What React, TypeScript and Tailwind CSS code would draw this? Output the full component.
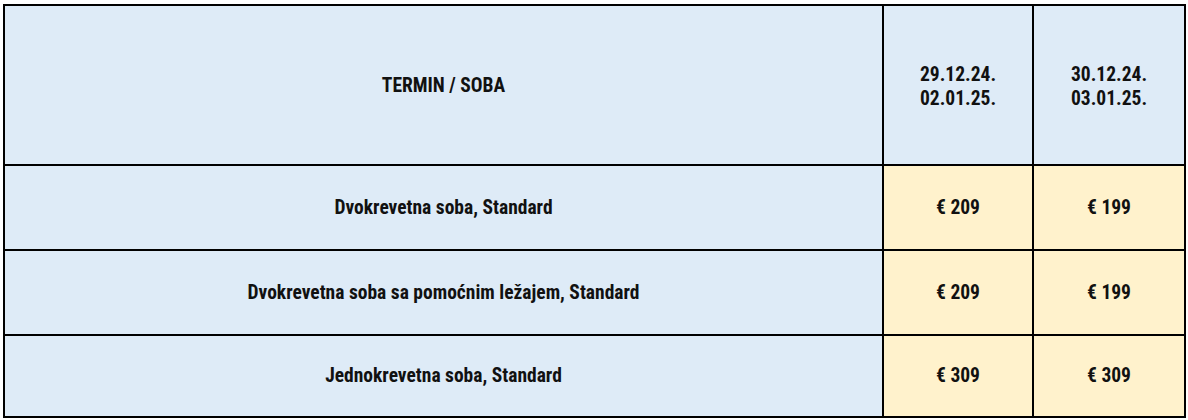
const rows = [
  { name: "Dvokrevetna soba, Standard", a: "€ 209", b: "€ 199" },
  { name: "Dvokrevetna soba sa pomoćnim ležajem, Standard", a: "€ 209", b: "€ 199" },
  { name: "Jednokrevetna soba, Standard", a: "€ 309", b: "€ 309" },
];

export default function App() {
  return (
    <div className="h-[420px] w-[1188px] bg-white pl-[3px] pt-[4px] font-['Roboto_Condensed','Liberation_Sans_Narrow',sans-serif] font-bold text-[19.5px] text-[#111]">
      <table className="w-[1181px] table-fixed border-collapse">
        <colgroup>
          <col className="w-[879px]" />
          <col className="w-[150px]" />
          <col className="w-[152px]" />
        </colgroup>
        <thead>
          <tr className="h-[160px] bg-[#deebf7]">
            <th className="border-2 border-black pt-[2px] text-center">TERMIN / SOBA</th>
            <th className="border-2 border-black pt-[4px] text-center leading-6">
              29.12.24.
              <br />
              02.01.25.
            </th>
            <th className="border-2 border-black pt-[4px] text-center leading-6">
              30.12.24.
              <br />
              03.01.25.
            </th>
          </tr>
        </thead>
        <tbody>
          {rows.map((r, i) => (
            <tr key={r.name} className={i === 2 ? "h-[82px]" : "h-[85px]"}>
              <td className="border-2 border-black bg-[#deebf7] text-center">{r.name}</td>
              <td className="border-2 border-black bg-[#fff2cc] text-center">{r.a}</td>
              <td className="border-2 border-black bg-[#fff2cc] text-center">{r.b}</td>
            </tr>
          ))}
        </tbody>
      </table>
    </div>
  );
}
